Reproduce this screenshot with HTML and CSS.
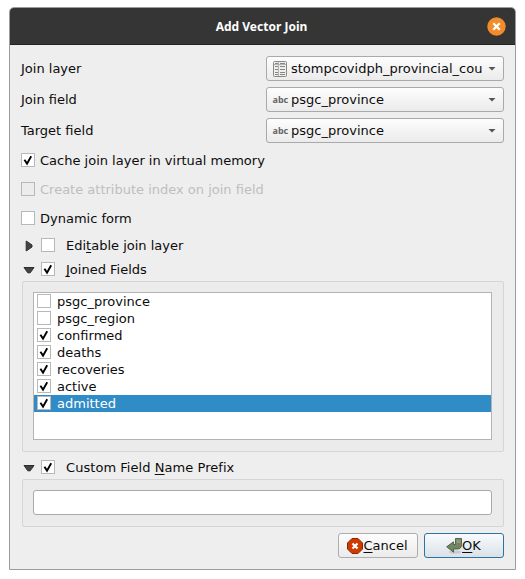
FILE: index.html
```html
<!DOCTYPE html>
<html lang="en">
<head>
<meta charset="utf-8">
<title>Add Vector Join</title>
<link rel="stylesheet" href="styles.css">
</head>
<body>
<svg class="defs" width="0" height="0" aria-hidden="true">
  <symbol id="tick" viewBox="0 0 14 14"><path d="M3.4 6.8 L6 10.6 L10.2 3.2" fill="none" stroke="#000" stroke-width="1.9"/></symbol>
  <symbol id="down" viewBox="0 0 12 8"><path d="M1 1.5H11L7.2 6.8H4.8Z" fill="#444446" stroke="#2d2d2d" stroke-width="1" stroke-linejoin="round"/></symbol>
  <symbol id="right" viewBox="0 0 8 12"><path d="M1.2 1V11L7 7V5Z" fill="#444446" stroke="#2d2d2d" stroke-width="1" stroke-linejoin="round"/></symbol>
</svg>
<main class="window">
  <header class="titlebar">
    <h1>Add Vector Join</h1>
    <svg class="close" width="19" height="19" viewBox="0 0 19 19"><circle cx="9.5" cy="9.5" r="9.2" fill="#f28c2a"/><path d="M6.3 6.3L12.7 12.7M12.7 6.3L6.3 12.7" stroke="#fff" stroke-width="2.3"/></svg>
  </header>
  <div class="content">
    <div class="field"><label>Join layer</label>
      <div class="combo">
        <svg class="icon" width="14" height="16" viewBox="0 0 14 16"><rect x=".5" y=".5" width="13" height="15" rx="1" fill="#eeeeec" stroke="#888a85"/><path d="M1 3.5H13M5.5 1V15" stroke="#b4b5b2"/><path d="M2 5.5H5M7 5.5H12M2 8.5H5M7 8.5H12M2 11.5H5M7 11.5H12M2 13.5H5M7 13.5H12M2 2.5H5M7 2.5H12" stroke="#858783"/></svg>
        <span class="value">stompcovidph_provincial_cou</span><i class="caret"></i>
      </div>
    </div>
    <div class="field"><label>Join field</label>
      <div class="combo"><span class="abc">abc</span><span class="value">psgc_province</span><i class="caret"></i></div>
    </div>
    <div class="field"><label>Target field</label>
      <div class="combo"><span class="abc">abc</span><span class="value">psgc_province</span><i class="caret"></i></div>
    </div>
    <div class="options">
      <div class="option"><span class="box"><svg><use href="#tick"/></svg></span><span>Cache join layer in virtual memory</span></div>
      <div class="option disabled"><span class="box"></span><span>Create attribute index on join field</span></div>
      <div class="option"><span class="box"></span><span>Dynamic form</span></div>
    </div>
    <div class="section"><span class="arrow"><svg width="8" height="12"><use href="#right"/></svg></span><span class="box"></span><span class="name">Edi<u>t</u>able join layer</span></div>
    <div class="section"><span class="arrow"><svg width="12" height="8"><use href="#down"/></svg></span><span class="box"><svg><use href="#tick"/></svg></span><span class="name"><u>J</u>oined Fields</span></div>
    <div class="group fields">
      <div class="list">
        <div class="item"><span class="box"></span><span>psgc_province</span></div>
        <div class="item"><span class="box"></span><span>psgc_region</span></div>
        <div class="item"><span class="box"><svg><use href="#tick"/></svg></span><span>confirmed</span></div>
        <div class="item"><span class="box"><svg><use href="#tick"/></svg></span><span>deaths</span></div>
        <div class="item"><span class="box"><svg><use href="#tick"/></svg></span><span>recoveries</span></div>
        <div class="item"><span class="box"><svg><use href="#tick"/></svg></span><span>active</span></div>
        <div class="item selected"><span class="box"><svg><use href="#tick"/></svg></span><span>admitted</span></div>
      </div>
    </div>
    <div class="section prefix-title"><span class="arrow"><svg width="12" height="8"><use href="#down"/></svg></span><span class="box"><svg><use href="#tick"/></svg></span><span class="name">Custom Field <u>N</u>ame Prefix</span></div>
    <div class="group prefix"><input class="entry" type="text" aria-label="Custom Field Name Prefix"></div>
    <div class="buttons">
      <button class="button" type="button">
        <svg width="16" height="16" viewBox="0 0 16 16"><path d="M5 .5H11L15.5 5V11L11 15.5H5L.5 11V5Z" fill="#cf3a02" stroke="#8c2600"/><path d="M5.5 5.5L10.5 10.5M10.5 5.5L5.5 10.5" stroke="#fff" stroke-width="2.2"/></svg><span><u>C</u>ancel</span>
      </button>
      <button class="button primary" type="button">
        <svg width="16" height="16" viewBox="0 0 16 16"><ellipse cx="9" cy="14" rx="6" ry="1.7" fill="#b9bfc3" opacity=".7"/><path d="M9.5 .5H15.5V6.5Q15.5 11 11.5 11H7.5V14.2L.7 8.8L7.5 3.8V6.5H9.5Z" fill="#728661" stroke="#3f4e35" stroke-width=".8"/><path d="M10.5 1.5H14.5V5H10.5Z" fill="#8b9c7c"/></svg><span><u>O</u>K</span>
      </button>
    </div>
  </div>
</main>
</body>
</html>
```

FILE: styles.css
```css
* { box-sizing: border-box; }
body {
  margin: 0;
  padding: 7px 9px 9px;
  background: #fff;
  color: #0c0c0c;
  font: 13px/17px "DejaVu Sans", sans-serif;
}
.defs { position: absolute; }
svg { display: block; flex: none; }
.window {
  width: 507px;
  height: 563px;
  border: 1px solid #9b9b9b;
  border-radius: 5px 5px 0 0;
  background: #eee;
  overflow: hidden;
}
.titlebar {
  display: grid;
  grid-template-columns: 1fr auto 1fr;
  align-items: center;
  height: 37px;
  padding: 0 9px 0 7px;
  background: #353535;
  border-bottom: 1px solid #222;
  color: #fff;
}
.titlebar h1 {
  grid-column: 2;
  margin: 0;
  font: bold 12px/17px "Noto Sans", sans-serif;
}
.close { justify-self: end; }
.content { padding: 11px 11px 0; }
.field {
  display: flex;
  justify-content: space-between;
  align-items: center;
  height: 25px;
  margin-bottom: 6px;
}
.combo {
  display: flex;
  align-items: center;
  width: 238px;
  height: 25px;
  padding: 0 7px 0 6px;
  border: 1px solid #a9a9a9;
  border-radius: 3px;
  background: linear-gradient(#fdfdfd, #ebebeb);
}
.icon { margin-right: 4px; }
.abc {
  width: 18px;
  margin-left: -.5px;
  margin-right: .5px;
  color: #666;
  font: bold 9px/12px "Noto Sans", sans-serif;
}
.value { flex: 1; white-space: nowrap; }
.caret {
  width: 8px;
  height: 4px;
  background: #555;
  clip-path: polygon(0 0, 100% 0, 50% 100%);
}
.options { display: grid; gap: 12px; margin-top: 9px; }
.option { display: flex; align-items: flex-start; gap: 5px; height: 17px; }
.option .box { margin-top: 1px; }
.disabled { color: #bebebe; }
.box {
  flex: none;
  width: 14px;
  height: 14px;
  border: 1px solid #b8b8b8;
  background: #fff;
}
.box svg { width: 14px; height: 14px; margin: -1px; }
.disabled .box { background: #ececec; }
.section { display: flex; align-items: center; height: 24px; }
.options + .section { margin-top: 6px; }
.arrow { display: flex; justify-content: center; width: 16px; padding-top: 2px; }
.section .box { margin-left: 4px; }
.name { margin-left: 11px; }
.prefix-title .name { letter-spacing: .05px; }
.group {
  width: 482px;
  margin-left: 1px;
  padding: 10px;
  border: 1px solid #d5d5d5;
  border-radius: 2px;
  background: #ebebeb;
}
.fields { height: 171px; }
.list {
  width: 459px;
  height: 148px;
  border: 1px solid #b4b4b4;
  background: #fff;
}
.item { display: flex; align-items: flex-start; gap: 6px; height: 17px; padding-left: 3px; }
.item .box { margin-top: 1px; }
.selected { background: #308cc6; color: #fff; }
.prefix-title { margin-top: 3px; }
.prefix { height: 48px; }
.entry {
  display: block;
  width: 459px;
  height: 25px;
  border: 1px solid #a9a9a9;
  border-radius: 3px;
  background: #fff;
}
.buttons { display: flex; justify-content: flex-end; gap: 6px; margin-top: 6px; }
.button {
  display: flex;
  align-items: center;
  justify-content: center;
  width: 80px;
  height: 25px;
  padding: 0 1px 0 0;
  border: 1px solid #adadad;
  border-radius: 3px;
  background: linear-gradient(#fdfdfd, #ebebeb);
  color: inherit;
  font: inherit;
}
.primary { border-color: #2a73a3; background: linear-gradient(#f9fbfc, #d9e1e8); }
u { text-decoration-thickness: 1px; text-underline-offset: 2px; text-decoration-skip-ink: none; }
```
